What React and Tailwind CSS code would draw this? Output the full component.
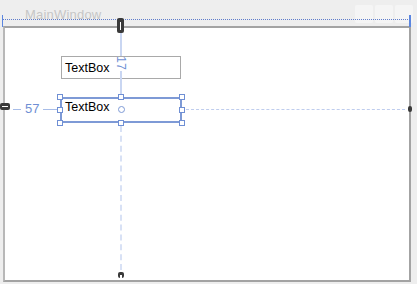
// WPF designer surface: MainWindow with two TextBoxes and margin adorners
import React from "react";

function Handle({ className }) {
  return <div className={`absolute w-[6px] h-[6px] bg-white border border-[#6f8fd4] ${className}`} />;
}

function LinkGlyph({ className }) {
  return <div className={`absolute bg-[#3a3a3a] rounded-[2px] ${className}`} />;
}

function TextBox({ className, children }) {
  return (
    <div className={`bg-white flex pl-[3px] ${className}`}>
      <span className="text-[12.5px] leading-[14px] text-black">{children}</span>
    </div>
  );
}

export default function App() {
  return (
    <div className="w-[417px] h-[284px] bg-[#eeeeee] relative overflow-hidden font-['Liberation_Sans',sans-serif] pl-[3px]">
      {/* title bar */}
      <div className="h-[26px] flex items-start">
        <span className="ml-[22px] mt-[7px] text-[13px] leading-[15px] text-[#c6c6c6] tracking-[0.2px]">MainWindow</span>
        <div className="ml-auto mt-[5px] mr-[4px] flex gap-[2px]">
          <div className="w-[18px] h-[18px] bg-[#f5f5f5] rounded-[2px]" />
          <div className="w-[18px] h-[18px] bg-[#f5f5f5] rounded-[2px]" />
          <div className="w-[18px] h-[18px] bg-[#f5f5f5] rounded-[2px]" />
        </div>
      </div>

      {/* window body: the textboxes sit by their margins */}
      <div className="w-[408px] h-[256px] bg-white border-2 border-[#a3a3a3] border-l-[#b8b8b8] flex flex-col items-start">
        <TextBox className="ml-[56px] mt-[28px] w-[120px] h-[23px] border border-[#a9a9a9] items-center">TextBox</TextBox>
        <TextBox className="ml-[55px] mt-[18px] w-[122px] h-[26px] border-2 border-[#7e9ad6] pt-[1px]">TextBox</TextBox>
      </div>

      {/* dotted guide above the window */}
      <div className="absolute left-[3px] top-[19px] w-[407px] border-t border-dotted border-[#5f7dcc]" />
      <div className="absolute left-[2px] top-[15px] w-px h-[12px] bg-[#5b86e0]" />
      <div className="absolute left-[409px] top-[15px] w-[2px] h-[12px] bg-[#5b86e0]" />

      {/* top margin adorner */}
      <LinkGlyph className="left-[117px] top-[18px] w-[7px] h-[15px]" />
      <div className="absolute left-[120px] top-[22px] w-px h-[8px] bg-white" />
      <div className="absolute left-[120px] top-[33px] w-[2px] h-[23px] bg-[#c9d6f2]" />
      <div className="absolute left-[120px] top-[57px] w-[2px] h-[21px] bg-white" />
      <span className="absolute left-[113px] top-[56px] w-[16px] h-[14px] text-[12.5px] leading-[14px] text-[#6f8fd4] rotate-90 flex items-center justify-center">17</span>
      <div className="absolute left-[120px] top-[71px] w-[2px] h-[26px] bg-[#c9d6f2]" />

      {/* left margin adorner */}
      <LinkGlyph className="left-0 top-[103px] w-[10px] h-[7px]" />
      <div className="absolute left-[2px] top-[106px] w-[6px] h-px bg-white" />
      <div className="absolute left-[13px] top-[109px] w-[8px] h-px bg-[#a8bde8]" />
      <span className="absolute left-[25px] top-[101px] text-[13px] leading-[15px] text-[#6f8fd4]">57</span>
      <div className="absolute left-[43px] top-[109px] w-[14px] h-px bg-[#a8bde8]" />

      {/* right dashed guide */}
      <div className="absolute left-[186px] top-[109px] w-[219px] border-t border-dashed border-[#bfcdee]" />
      <LinkGlyph className="left-[408px] top-[106px] w-[4px] h-[6px]" />

      {/* bottom dashed guide */}
      <div className="absolute left-[120px] top-[126px] h-[144px] border-l-2 border-dashed border-[#d8e1f5]" />
      <LinkGlyph className="left-[118px] top-[272px] w-[6px] h-[6px]" />
      <div className="absolute left-[120px] top-[275px] w-[2px] h-[3px] bg-white" />

      {/* selection adorner */}
      <div className="absolute left-[118px] top-[106px] w-[7px] h-[7px] rounded-full border border-[#7e9ad6] bg-white" />
      <Handle className="left-[57px] top-[94px]" />
      <Handle className="left-[118px] top-[94px]" />
      <Handle className="left-[179px] top-[94px]" />
      <Handle className="left-[57px] top-[107px]" />
      <Handle className="left-[179px] top-[107px]" />
      <Handle className="left-[57px] top-[120px]" />
      <Handle className="left-[118px] top-[120px]" />
      <Handle className="left-[179px] top-[120px]" />
    </div>
  );
}
